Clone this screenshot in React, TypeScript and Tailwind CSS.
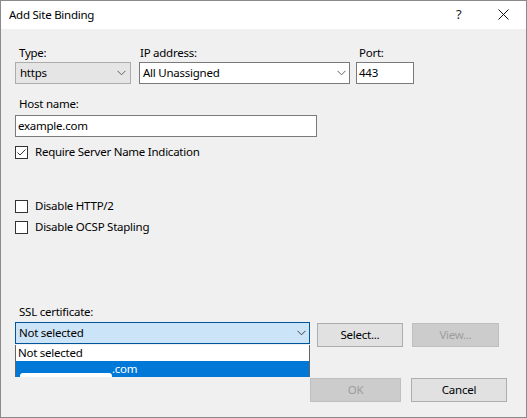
import React from "react";

function Chevron({ color = "#606060" }: { color?: string }) {
  return (
    <svg width="9" height="6" viewBox="0 0 9 6" className="shrink-0">
      <path d="M0.5 0.8 L4.5 4.8 L8.5 0.8" stroke={color} strokeWidth="1" fill="none" />
    </svg>
  );
}

function Checkbox({ checked, label, className = "" }: { checked?: boolean; label: string; className?: string }) {
  return (
    <div className={"flex items-center h-[16px] " + className}>
      <div className="w-[13px] h-[13px] border border-[#333333] bg-white flex items-center justify-center shrink-0">
        {checked && (
          <svg width="11" height="11" viewBox="0 0 11 11">
            <path d="M1.5 5.5 L4 8 L9.5 2.5" stroke="#333333" strokeWidth="1" fill="none" />
          </svg>
        )}
      </div>
      <span className="ml-[7px] leading-[16px]">{label}</span>
    </div>
  );
}

export default function App() {
  return (
    <div className="w-[527px] h-[418px] border border-[#8a8a8a] bg-[#f0f0f0] flex flex-col font-['Noto_Sans',sans-serif] text-[11.5px] tracking-[-0.25px] text-black overflow-hidden">
      {/* Title bar */}
      <div className="h-[28px] bg-white flex items-center pl-[8px] relative shrink-0">
        <span className="leading-[16px]">Add Site Binding</span>
        <span className="absolute left-[455px] top-[5px] leading-[16px] text-[13px] text-[#222]">?</span>
        <svg className="absolute left-[497px] top-[8px]" width="11" height="11" viewBox="0 0 11 11">
          <path d="M0.5 0.5 L10.5 10.5 M10.5 0.5 L0.5 10.5" stroke="#111" strokeWidth="1" fill="none" />
        </svg>
      </div>

      {/* Body */}
      <div className="flex-1 flex flex-col pl-[14px] pt-[16px]">
        {/* Row 1 */}
        <div className="flex items-start">
          <div className="flex flex-col w-[116px]">
            <span className="h-[16px] leading-[16px] pl-[4px]">Type:</span>
            <div className="mt-[1px] h-[22px] border border-[#acacac] bg-[#e5e5e5] flex items-center justify-between pl-[4px] pr-[4px]">
              <span className="leading-[16px]">https</span>
              <Chevron />
            </div>
          </div>
          <div className="flex flex-col w-[211px] ml-[8px]">
            <span className="h-[16px] leading-[16px] pl-[1px]">IP address:</span>
            <div className="mt-[1px] h-[22px] border border-[#7a7a7a] bg-white flex items-center justify-between pl-[3px] pr-[3px]">
              <span className="leading-[16px]">All Unassigned</span>
              <Chevron />
            </div>
          </div>
          <div className="flex flex-col w-[58px] ml-[6px]">
            <span className="h-[16px] leading-[16px] pl-[3px]">Port:</span>
            <div className="mt-[1px] h-[22px] border border-[#7a7a7a] bg-white flex items-center pl-[2px]">
              <span className="leading-[16px]">443</span>
            </div>
          </div>
        </div>

        {/* Host name */}
        <span className="mt-[12px] h-[16px] leading-[16px] pl-[4px]">Host name:</span>
        <div className="mt-[3px] w-[302px] h-[22px] border border-[#7a7a7a] bg-white flex items-center pl-[2px]">
          <span className="leading-[16px]">example.com</span>
        </div>

        <Checkbox checked label="Require Server Name Indication" className="mt-[7px]" />
        <Checkbox label="Disable HTTP/2" className="mt-[38px]" />
        <Checkbox label="Disable OCSP Stapling" className="mt-[5px]" />

        {/* SSL certificate */}
        <span className="mt-[69px] h-[16px] leading-[16px] pl-[4px]">SSL certificate:</span>
        <div className="mt-[2px] flex items-start">
          <div className="relative w-[295px]">
            <div className="h-[22px] border border-[#005499] bg-[#cce4f7] flex items-center justify-between pl-[3px] pr-[3px]">
              <span className="leading-[16px]">Not selected</span>
              <Chevron color="#404040" />
            </div>
            <div className="absolute left-0 top-[23px] w-[295px] flex flex-col border-x border-[#646464] z-10">
              <div className="h-[16px] bg-white flex items-center pl-[2px]">
                <span className="leading-[16px]">Not selected</span>
              </div>
              <div className="relative h-[16px] bg-[#0078d7] text-white flex items-center pl-[96px]">
                <span className="leading-[16px]">.com</span>
                <div className="absolute left-[4px] top-[12px] w-[92px] h-[4px] bg-white rounded-t-[3px]" />
              </div>
            </div>
          </div>
          <button className="mt-[1px] ml-[7px] w-[86px] h-[24px] border border-[#adadad] bg-[#e1e1e1] leading-[16px]">
            Select...
          </button>
          <button className="mt-[1px] ml-[9px] w-[87px] h-[24px] border border-[#bfbfbf] bg-[#cccccc] text-[#9d9d9d] leading-[16px]">
            View...
          </button>
        </div>

        {/* Bottom buttons */}
        <div className="mt-[31px] flex justify-end pr-[19px]">
          <button className="w-[91px] h-[24px] border border-[#bfbfbf] bg-[#cccccc] text-[#9d9d9d] leading-[16px]">
            OK
          </button>
          <button className="ml-[10px] w-[96px] h-[24px] border border-[#adadad] bg-[#e1e1e1] leading-[16px]">
            Cancel
          </button>
        </div>
      </div>
    </div>
  );
}
